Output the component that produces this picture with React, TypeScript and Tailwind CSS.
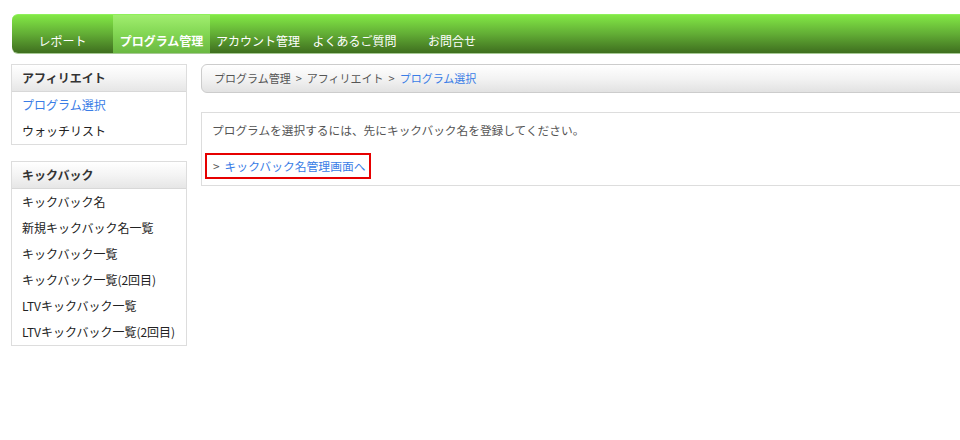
import React from "react";

const font = { fontFamily: '"Noto Sans CJK JP", "Noto Sans", sans-serif' };

function SideBox({ title, items }: { title: string; items: { label: string; active?: boolean }[] }) {
  return (
    <div className="border border-[#dddddd] bg-white">
      <div className="h-[27px] flex items-center pl-[10px] text-[12px] font-bold text-[#333] bg-gradient-to-b from-[#ffffff] via-[#f4f4f4] to-[#e6e6e6] border-b border-[#d8d8d8]">
        {title}
      </div>
      {items.map((it) => (
        <div
          key={it.label}
          className={`h-[26px] flex items-center pl-[10px] text-[12px] ${it.active ? "text-[#3a7de6]" : "text-[#222]"}`}
        >
          {it.label}
        </div>
      ))}
    </div>
  );
}

export default function App() {
  return (
    <div className="w-[960px] h-[440px] bg-white overflow-hidden" style={font}>
      <div className="pt-[14px] pl-[12px]">
        <div className="h-[39px] rounded-l-[6px] flex items-stretch bg-gradient-to-b from-[#82e845] via-[#62ad35] to-[#3f6f1f] border-t border-[#8ff05a] shadow-[0_1px_0_#a6c994]">
          <div className="w-[101px] flex items-end justify-center pb-[3px] text-[12px] text-white">レポート</div>
          <div className="w-[97px] flex items-end justify-center pb-[3px] text-[12px] font-bold text-white bg-gradient-to-b from-[#a0ee6e] via-[#82d653] to-[#6bb842]">プログラム管理</div>
          <div className="w-[96px] flex items-end justify-center pb-[3px] text-[12px] text-white">アカウント管理</div>
          <div className="w-[97px] flex items-end justify-center pb-[3px] text-[12px] text-white">よくあるご質問</div>
          <div className="w-[98px] flex items-end justify-center pb-[3px] text-[12px] text-white">お問合せ</div>
        </div>
      </div>
      <div className="flex pt-[11px] pl-[11px] gap-[14px]">
        <div className="w-[176px] flex flex-col gap-[16px]">
          <SideBox
            title="アフィリエイト"
            items={[{ label: "プログラム選択", active: true }, { label: "ウォッチリスト" }]}
          />
          <SideBox
            title="キックバック"
            items={[
              { label: "キックバック名" },
              { label: "新規キックバック名一覧" },
              { label: "キックバック一覧" },
              { label: "キックバック一覧(2回目)" },
              { label: "LTVキックバック一覧" },
              { label: "LTVキックバック一覧(2回目)" },
            ]}
          />
        </div>
        <div className="flex-1 flex flex-col gap-[19px] -mr-[20px]">
          <div className="h-[29px] rounded-l-[6px] border border-[#cccccc] bg-gradient-to-b from-[#ffffff] via-[#f3f3f3] to-[#e2e2e2] flex items-center pl-[12px] text-[11px] text-[#555]">
            <span>プログラム管理</span>
            <span className="mx-[5px]">&gt;</span>
            <span>アフィリエイト</span>
            <span className="mx-[5px]">&gt;</span>
            <span className="text-[#3a7de6]">プログラム選択</span>
          </div>
          <div className="h-[74px] border border-[#dddddd] pl-[3px] flex flex-col">
            <div className="h-[34px] flex items-center pl-[7px] text-[11.7px] text-[#555]">
              プログラムを選択するには、先にキックバック名を登録してください。
            </div>
            <div className="w-[166px] h-[26px] mt-[6px] border-2 border-[#e60000] flex items-center pl-[6px] text-[11.8px]">
              <span className="text-[#555] mr-[5px]">&gt;</span>
              <span className="text-[#3a7de6]">キックバック名管理画面へ</span>
            </div>
          </div>
        </div>
      </div>
    </div>
  );
}
